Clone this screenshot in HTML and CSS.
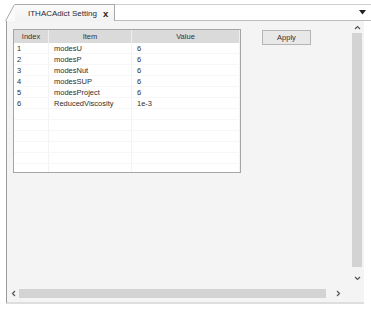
FILE: index.html
```html
<!DOCTYPE html>
<html lang="en">
<head>
    <meta charset="UTF-8">
    <title>ITHACAdict Setting</title>
    <link rel="stylesheet" href="styles.css">
</head>
<body>

<div class="window">
    <!-- tab strip -->
    <div class="tabbar">
        <div class="tab">
            <svg class="tab-slant" width="10" height="17" viewBox="0 0 10 17">
                <polygon points="0,17 9,0.5 10,0.5 10,17" fill="#fbfbfb"/>
                <line x1="0.5" y1="17" x2="9.5" y2="0.5" stroke="#a9a9a9" stroke-width="1"/>
            </svg>
            <div class="tab-label">
                <span>ITHACAdict Setting</span>
                <span class="tab-close">x</span>
            </div>
        </div>
        <div class="tab-fill"></div>
        <div class="tab-menu">
            <svg width="7" height="5" viewBox="0 0 7 5"><polygon points="0,0 7,0 3.5,4.5" fill="#222"/></svg>
        </div>
    </div>

    <!-- panel -->
    <div class="panel">
        <div class="panel-main">
            <div class="content">
                <div class="grid-box">
                    <table class="grid">
                        <thead>
                            <tr>
                                <th class="col-index">Index</th>
                                <th class="col-item">Item</th>
                                <th class="col-value">Value</th>
                            </tr>
                        </thead>
                        <tbody>
                            <tr><td>1</td><td>modesU</td><td>6</td></tr>
                            <tr><td>2</td><td>modesP</td><td>6</td></tr>
                            <tr><td>3</td><td>modesNut</td><td>6</td></tr>
                            <tr><td>4</td><td>modesSUP</td><td>6</td></tr>
                            <tr><td>5</td><td>modesProject</td><td>6</td></tr>
                            <tr><td>6</td><td>ReducedViscosity</td><td>1e-3</td></tr>
                            <tr><td></td><td></td><td></td></tr>
                            <tr><td></td><td></td><td></td></tr>
                            <tr><td></td><td></td><td></td></tr>
                            <tr><td></td><td></td><td></td></tr>
                            <tr><td></td><td></td><td></td></tr>
                            <tr><td></td><td></td><td></td></tr>
                        </tbody>
                    </table>
                </div>
                <button class="apply">Apply</button>
            </div>
            <div class="vscroll">
                <div class="arrow">
                    <svg width="7" height="5" viewBox="0 0 7 5"><polyline points="1,4 3.5,1.5 6,4" fill="none" stroke="#555" stroke-width="1.2"/></svg>
                </div>
                <div class="vthumb"></div>
                <div class="arrow arrow-down">
                    <svg width="7" height="5" viewBox="0 0 7 5"><polyline points="1,1 3.5,3.5 6,1" fill="none" stroke="#555" stroke-width="1.2"/></svg>
                </div>
            </div>
        </div>
        <div class="hscroll">
            <div class="harrow">
                <svg width="5" height="7" viewBox="0 0 5 7"><polyline points="4,1 1.5,3.5 4,6" fill="none" stroke="#555" stroke-width="1.2"/></svg>
            </div>
            <div class="hthumb"></div>
            <div class="harrow harrow-right">
                <svg width="5" height="7" viewBox="0 0 5 7"><polyline points="1,1 3.5,3.5 1,6" fill="none" stroke="#555" stroke-width="1.2"/></svg>
            </div>
            <div class="corner"></div>
        </div>
    </div>
</div>

</body>
</html>
```

FILE: styles.css
```css
body {
    margin: 0;
    padding: 0;
    background-color: #ffffff;
    font-family: "Liberation Sans", Arial, sans-serif;
    color: #333;
}
.window {
    width: 371px;
    height: 312px;
    display: flex;
    flex-direction: column;
}

/* tab strip */
.tabbar {
    margin-top: 4px;
    height: 17px;
    display: flex;
    align-items: stretch;
}
.tab {
    display: flex;
    margin-left: 5px;
}
.tab-slant {
    display: block;
}
.tab-label {
    display: flex;
    align-items: center;
    gap: 6px;
    padding: 0 6px 0 13px;
    border-top: 1px solid #a9a9a9;
    border-right: 1px solid #a9a9a9;
    background: linear-gradient(#fbfbfb, #f2f2f2);
    font-size: 8px;
    color: #1f2a3a;
}
.tab-close {
    font-weight: bold;
    font-size: 9.5px;
    color: #222;
}
.tab-fill {
    flex: 1;
    border-top: 1px solid #cfcfcf;
    border-bottom: 1px solid #bdbdbd;
}
.tab-menu {
    width: 14px;
    display: flex;
    align-items: center;
    justify-content: center;
    border-top: 1px solid #cfcfcf;
    border-bottom: 1px solid #bdbdbd;
    padding-right: 2px;
}

/* panel */
.panel {
    margin-left: 6px;
    width: 357px;
    height: 281px;
    border-left: 1px solid #9c9c9c;
    border-bottom: 2px solid #dedede;
    background-color: #f4f4f4;
    display: flex;
    flex-direction: column;
}
.panel-main {
    flex: 1;
    display: flex;
}
.content {
    flex: 1;
    display: flex;
    align-items: flex-start;
    gap: 21px;
    padding: 8px 0 0 6px;
}
.grid-box {
    width: 226px;
    height: 142px;
    border: 1px solid #a6a6a6;
    background: #ffffff;
    overflow: hidden;
}
.grid {
    width: 100%;
    border-collapse: collapse;
    font-size: 7.5px;
    table-layout: fixed;
}
.grid th {
    height: 13px;
    padding: 0;
    background-color: #dadada;
    font-weight: normal;
    color: #333;
    border-right: 1px solid #eeeeee;
}
.grid .col-index { width: 34px; }
.grid .col-item { width: 82px; }
.grid td {
    height: 10px;
    padding: 0 0 0 3px;
    border-right: 1px solid #f3f3f3;
    border-bottom: 1px solid #f7f7f7;
    color: #2e2e2e;
    white-space: nowrap;
}
.grid td:nth-child(2) {
    padding-left: 5px;
}
.grid td:nth-child(3) {
    padding-left: 5px;
}
.apply {
    width: 49px;
    height: 15px;
    margin-top: 1px;
    padding: 0;
    border: 1px solid #b5b5b5;
    background-color: #e8e8e8;
    font-family: "Liberation Sans", Arial, sans-serif;
    font-size: 7.5px;
    color: #333;
}

/* scrollbars */
.vscroll {
    width: 14px;
    display: flex;
    flex-direction: column;
    align-items: center;
}
.arrow {
    height: 12px;
    display: flex;
    align-items: center;
    justify-content: center;
}
.vthumb {
    width: 10px;
    height: 234px;
    background-color: #d3d3d3;
}
.arrow-down {
    margin-top: auto;
    height: 19px;
}
.hscroll {
    height: 11px;
    margin-bottom: 3px;
    display: flex;
    align-items: center;
}
.harrow {
    width: 12px;
    display: flex;
    justify-content: center;
}
.hthumb {
    width: 307px;
    height: 9px;
    background-color: #d3d3d3;
}
.harrow-right {
    width: 24px;
}
.corner {
    width: 14px;
}
```
